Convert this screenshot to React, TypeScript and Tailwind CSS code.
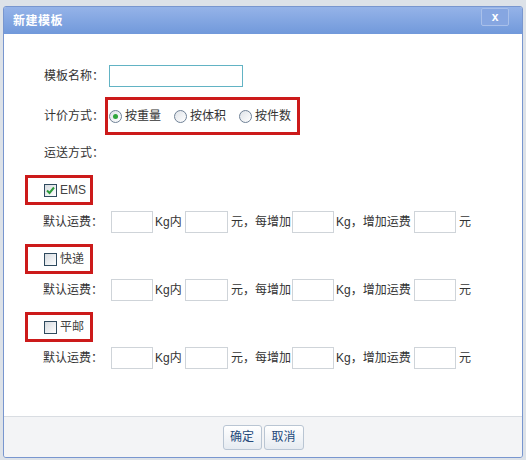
import React from "react";

const font = { fontFamily: '"Liberation Sans", "Noto Sans CJK SC", sans-serif' };

function Radio({ checked, label }: { checked?: boolean; label: string }) {
  return (
    <label className="flex items-center">
      <span className="flex items-center justify-center w-[13px] h-[13px] rounded-full border border-[#6f8196] bg-gradient-to-br from-[#dfe3e8] to-white">
        {checked && <span className="w-[5px] h-[5px] rounded-full bg-[#2fa53a]" />}
      </span>
      <span className="ml-[3px]">{label}</span>
    </label>
  );
}

function Checkbox({ checked, label }: { checked?: boolean; label: string }) {
  return (
    <label className="flex items-center">
      <span className="flex items-center justify-center w-[13px] h-[13px] border border-[#2f4a5e] bg-gradient-to-br from-[#d6dbe0] to-white">
        {checked && (
          <svg width="11" height="11" viewBox="0 0 11 11">
            <path d="M2 5.5 L4.5 8 L9 2.5" fill="none" stroke="#2c9a3a" strokeWidth="2" />
          </svg>
        )}
      </span>
      <span className="ml-[3px] text-[#444]">{label}</span>
    </label>
  );
}

function Box() {
  return <span className="w-[42px] h-[22px] shrink-0 border border-[#cfd4d9] bg-white" />;
}

function FeeRow({ mt }: { mt: string }) {
  return (
    <div className={`flex items-center h-[22px] ml-[39px] whitespace-nowrap ${mt}`}>
      <span className="w-[68px] shrink-0">默认运费：</span>
      <Box />
      <span className="w-[32px] shrink-0 pl-[2px]">Kg内</span>
      <span className="w-[43px] h-[22px] shrink-0 border border-[#cfd4d9] bg-white" />
      <span className="w-[64px] shrink-0 pl-[3px]">元，每增加</span>
      <Box />
      <span className="w-[80px] shrink-0 pl-[2px]">Kg，增加运费</span>
      <Box />
      <span className="pl-[3px]">元</span>
    </div>
  );
}

function Method({ mt, checked, label }: { mt: string; checked?: boolean; label: string }) {
  return (
    <div className={`flex items-center w-[68px] h-[30px] ml-[21px] border-[3px] border-[#cc1a1a] pl-[16px] ${mt}`}>
      <Checkbox checked={checked} label={label} />
    </div>
  );
}

export default function App() {
  return (
    <div className="w-[526px] h-[460px] bg-[#dde2e8] pt-[6px] pl-[3px]" style={font}>
      <div className="w-[520px] h-[452px] flex flex-col border border-[#7896cf] rounded-[3px] overflow-hidden text-[12px] text-[#333]">
        {/* Header */}
        <div className="h-[27px] flex items-center justify-between pl-[9px] pr-[13px] bg-gradient-to-b from-[#95b3e8] to-[#7199db]">
          <span className="text-white font-bold text-[12px] tracking-[0.5px]">新建模板</span>
          <span className="flex items-center justify-center w-[28px] h-[18px] mb-[8px] border border-[#a9c0ea] rounded-[2px] bg-[#86a6e1] text-white font-bold text-[12px] leading-none">
            x
          </span>
        </div>

        {/* Body */}
        <div className="flex-1 bg-white flex flex-col">
          <div className="flex items-center h-[22px] mt-[31px] ml-[40px]">
            <span className="w-[65px]">模板名称：</span>
            <span className="w-[134px] h-[22px] border border-[#62b3c4] bg-white" />
          </div>

          <div className="flex items-center mt-[10px] ml-[40px]">
            <span className="w-[61px]">计价方式：</span>
            <div className="flex items-center gap-[13px] w-[195px] h-[38px] border-[3px] border-[#cc1a1a] pl-[1px]">
              <Radio checked label="按重量" />
              <Radio label="按体积" />
              <Radio label="按件数" />
            </div>
          </div>

          <div className="flex items-center h-[16px] mt-[10px] ml-[40px]">运送方式：</div>

          <Method mt="mt-[14px]" checked label="EMS" />
          <FeeRow mt="mt-[6px]" />
          <Method mt="mt-[11px]" label="快递" />
          <FeeRow mt="mt-[5px]" />
          <Method mt="mt-[11px]" label="平邮" />
          <FeeRow mt="mt-[5px]" />
        </div>

        {/* Footer */}
        <div className="h-[41px] border-t border-[#d9dde2] bg-[#f3f4f6] flex items-center justify-center gap-[2px]">
          <button className="w-[39px] h-[25px] border border-[#b9c5d3] rounded-[3px] bg-gradient-to-b from-white to-[#e6ebf1] text-[#23497a] text-[12px]">
            确定
          </button>
          <button className="w-[40px] h-[25px] border border-[#b9c5d3] rounded-[3px] bg-gradient-to-b from-white to-[#e6ebf1] text-[#23497a] text-[12px]">
            取消
          </button>
        </div>
      </div>
    </div>
  );
}
